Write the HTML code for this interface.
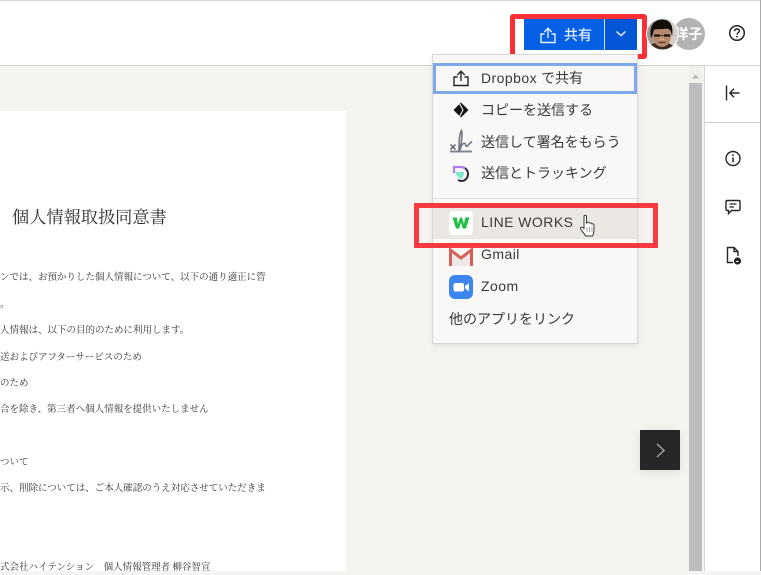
<!DOCTYPE html>
<html lang="ja">
<head>
<meta charset="utf-8">
<title>共有</title>
<style>
html,body{margin:0;padding:0}
body{width:761px;height:571px;position:relative;overflow:hidden;background:#f5f4f0;font-family:"Liberation Sans","Noto Sans CJK JP",sans-serif}
.a{position:absolute}
svg{position:absolute;overflow:visible}
.t{position:absolute;white-space:nowrap;color:#3b3936;font-size:14px;line-height:20px;height:20px}
.l{letter-spacing:.45px}
.d{position:absolute;left:0;white-space:nowrap;color:#333;font-family:"Liberation Serif","Noto Serif CJK SC",serif;font-size:9.5px;line-height:14px;height:14px;filter:blur(.25px)}
</style>
</head>
<body>
<!-- top bar -->
<div class="a" style="left:0;top:0;width:761px;height:65px;background:#fff;border-top:1px solid #d6d6d6;box-sizing:border-box"></div>
<div class="a" style="left:0;top:65px;width:761px;height:1px;background:#d4d2ce"></div>

<!-- document page -->
<div class="a" style="left:0;top:111px;width:346px;height:460px;background:#fff"></div>
<div class="d" style="left:12px;top:208px;font-size:17.2px;line-height:20px;height:20px;color:#2e2e2e;filter:none">個人情報取扱同意書</div>
<div class="d" style="top:271px">ンでは、お預かりした個人情報について、以下の通り適正に管</div>
<div class="d" style="top:298px">。</div>
<div class="d" style="top:324px">人情報は、以下の目的のために利用します。</div>
<div class="d" style="top:351px">送およびアフターサービスのため</div>
<div class="d" style="top:377px">のため</div>
<div class="d" style="top:403px">合を除き、第三者へ個人情報を提供いたしません</div>
<div class="d" style="top:456px">ついて</div>
<div class="d" style="top:482px">示、削除については、ご本人確認のうえ対応させていただきま</div>
<div class="d" style="top:561px">式会社ハイテンション　個人情報管理者 柳谷智宣</div>

<!-- scrollbar -->
<div class="a" style="left:689px;top:66px;width:13px;height:17px;background:#f1f0ed"></div>
<div class="a" style="left:689px;top:83px;width:13px;height:488px;background:#bdbdbd"></div>
<svg style="left:689px;top:66px" width="13" height="17"><path d="M3 12.5L6.5 8.5L10 12.5Z" fill="#b3b3b3"/></svg>

<!-- next button -->
<div class="a" style="left:640px;top:430px;width:40px;height:40px;background:#262626;box-shadow:0 2px 10px rgba(0,0,0,.1)"></div>
<svg style="left:640px;top:430px" width="40" height="40"><path d="M17 14L24 20.5L17 27" fill="none" stroke="#a5a5a5" stroke-width="1.5"/></svg>

<!-- right panel -->
<div class="a" style="left:704px;top:66px;width:57px;height:505px;background:#fff;border-left:1px solid #d8d6d2;box-sizing:border-box"></div>
<div class="a" style="left:704px;top:122px;width:57px;height:1px;background:#cfcdc9"></div>
<div class="a" style="left:760px;top:0;width:1px;height:571px;background:#a9a9a9"></div>
<svg style="left:724px;top:84px" width="18" height="18"><path d="M2.5 1.5V16.5M15.5 9H6M10 4.8L5.8 9L10 13.2" fill="none" stroke="#262626" stroke-width="1.4"/></svg>
<svg style="left:724px;top:149px" width="18" height="18"><circle cx="9" cy="9.5" r="7" fill="none" stroke="#262626" stroke-width="1.4"/><path d="M9 8.5V13.2" stroke="#262626" stroke-width="1.5"/><circle cx="9" cy="6.2" r=".9" fill="#262626"/></svg>
<svg style="left:724px;top:198px" width="18" height="18"><path d="M3.5 2.5H14.5Q16 2.5 16 4V11Q16 12.5 14.5 12.5H7.5L4.5 15.5V12.5H3.5Q2 12.5 2 11V4Q2 2.5 3.5 2.5Z" fill="none" stroke="#262626" stroke-width="1.4"/><path d="M5.5 6H12.5M5.5 9H10" stroke="#262626" stroke-width="1.3"/></svg>
<svg style="left:724px;top:246px" width="18" height="20"><path d="M9 16.5H3.5V1.5H10L14 5.5V10M10 1.5V5.5H14" fill="none" stroke="#262626" stroke-width="1.4"/><circle cx="13.5" cy="15" r="3.6" fill="#262626"/><path d="M12 15.5H14.5" stroke="#fff" stroke-width="1"/></svg>

<!-- share button red annotation -->
<div class="a" style="left:510px;top:14px;width:137px;height:45px;box-sizing:border-box;border:5px solid #fb2f36;border-radius:3px;background:#fff"></div>
<div class="a" style="left:524px;top:19px;width:80px;height:31px;background:#0560e6"></div>
<div class="a" style="left:604px;top:19px;width:1px;height:31px;background:#d7e5fb"></div>
<div class="a" style="left:605px;top:19px;width:32px;height:31px;background:#0456d6"></div>
<svg style="left:539px;top:26px" width="18" height="18"><path d="M9 12V2.5M5.3 6L9 2.3L12.7 6M5.5 8H2V16.5H16V8H12.5" fill="none" stroke="#e6f0ff" stroke-width="1.4"/></svg>
<div class="t" style="left:564px;top:25px;color:#e8f0fd;font-weight:500">共有</div>
<svg style="left:615px;top:29px" width="12" height="10"><path d="M1.5 2.5L6 6.5L10.5 2.5" fill="none" stroke="#e6f0ff" stroke-width="1.5"/></svg>

<!-- avatars -->
<div class="a" style="left:673px;top:18px;width:32px;height:32px;border-radius:50%;background:#b2b2b2;overflow:hidden"><div class="a" style="left:1.5px;top:6px;font-size:14px;line-height:20px;font-weight:700;color:#fff;white-space:nowrap">洋子</div></div>
<svg style="left:646px;top:17px" width="34" height="34">
<defs><clipPath id="av"><circle cx="16.5" cy="17" r="15.5"/></clipPath></defs>
<circle cx="16.5" cy="17" r="16.5" fill="#fff"/>
<g clip-path="url(#av)">
<rect width="34" height="34" fill="#d6cfc9"/>
<rect x="0" y="0" width="8" height="34" fill="#a59a92"/>
<path d="M3 34V28L9 26H22L28 29L30 34Z" fill="#3d2a22"/>
<ellipse cx="16" cy="19" rx="9" ry="11" fill="#b58a6d"/>
<path d="M5 21C2.5 8 9 2.5 16 2.5C24 2.5 28 8 26 20C25 14 24 12 21 11.5C16 12.5 11 11.5 8 13C7 16 6.5 19 5 21Z" fill="#100d0b"/>
<path d="M8 18.5H14M18 18.5H24" stroke="#1a110d" stroke-width="2.2"/>
<path d="M14.5 18.5H17.5" stroke="#33241c" stroke-width="1"/>
<path d="M12.5 25.5H19.5" stroke="#5a3526" stroke-width="1.3"/>
<path d="M14 21.5H18V23H14Z" fill="#d3ac91"/>
</g></svg>

<!-- help -->
<svg style="left:727px;top:23px" width="20" height="20"><circle cx="10" cy="10" r="7.3" fill="none" stroke="#262626" stroke-width="1.5"/><path d="M7.6 8.2C7.6 6.7 8.7 6 10 6C11.4 6 12.4 6.8 12.4 8C12.4 9.6 10 9.6 10 11.6" fill="none" stroke="#262626" stroke-width="1.4"/><circle cx="10" cy="13.6" r=".9" fill="#262626"/></svg>

<!-- menu -->
<div class="a" style="left:432px;top:54px;width:206px;height:290px;box-sizing:border-box;background:#faf8f6;border:1px solid #d9d7d3;box-shadow:0 2px 6px rgba(0,0,0,.08)"></div>
<div class="a" style="left:433px;top:63px;width:204px;height:31px;box-sizing:border-box;border:3px solid #7ea8ec;background:#faf8f6"></div>
<svg style="left:452px;top:69px" width="18" height="18"><path d="M9 12V2.5M5.3 6L9 2.3L12.7 6M5.5 8H2V16.5H16V8H12.5" fill="none" stroke="#262626" stroke-width="1.4"/></svg>
<div class="t" style="left:481px;top:68px"><span class="l">Dropbox</span> で共有</div>

<svg style="left:453px;top:102px" width="16" height="16"><path d="M8 .5L15.5 8L8 15.5L.5 8Z" fill="#141414"/><path d="M6.5 1.5L10 8L6.5 14.5" fill="none" stroke="#faf8f6" stroke-width="1.1"/></svg>
<div class="t" style="left:481px;top:100px">コピーを送信する</div>

<svg style="left:449px;top:129px" width="24" height="25"><path d="M1 22.5H23" stroke="#7f8794" stroke-width="1.9"/><path d="M1.5 15.5L6.5 20.5M6.5 15.5L1.5 20.5" stroke="#59606d" stroke-width="1.5"/><path d="M10 23C10 14 10 6 12.5 1.5C14.5 6 11 18 11.5 19.5C13 14 16 13 16.5 15.5C17 18 18 18 20 15L23 12.5" fill="none" stroke="#6d7583" stroke-width="1.6"/></svg>
<div class="t" style="left:481px;top:132px">送信して署名をもらう</div>

<svg style="left:451px;top:164px" width="20" height="20"><path d="M3 9V3H10C14 3 17 6 17 10C17 14 14 17 10.5 17C9 17 8 16.5 7 16" fill="none" stroke="#2f2a44" stroke-width="2"/><path d="M3 9V3H10C12 3 13 3.5 14 4.5" fill="none" stroke="#b47cf4" stroke-width="2.2"/><path d="M4 8H13C13 11 12 14 10 15C7.5 14 5 11 4 8Z" fill="#7de8cf"/></svg>
<div class="t" style="left:481px;top:163px">送信とトラッキング</div>

<div class="a" style="left:433px;top:198px;width:204px;height:1px;background:#e2e0dc"></div>

<!-- hover row -->
<div class="a" style="left:433px;top:207px;width:204px;height:32px;background:#ebe8e3"></div>
<div class="a" style="left:449px;top:211px;width:24px;height:24px;background:#fff;border-radius:4px"></div>
<svg style="left:449px;top:211px" width="24" height="24"><path d="M3.5 6.5H7.8L9 13L11 6.5H13L15 13L16.2 6.5H20.5L17 17.5H13.8L12 11.5L10.2 17.5H7Z" fill="#22bf47"/></svg>
<div class="t l" style="left:481px;top:212px">LINE WORKS</div>

<!-- red annotation 2 -->
<div class="a" style="left:414px;top:203px;width:244px;height:45px;box-sizing:border-box;border:5px solid #fb3a3f"></div>

<!-- cursor -->
<svg style="left:579px;top:214px" width="18" height="24"><path d="M5 2.5C5 1 7.5 1 7.5 2.5V9.5L8 8.5C9 8 10 8 10.3 9C11.2 8.5 12.3 8.8 12.5 9.8C13.5 9.4 15 10 15 11.5V17C15 19.5 14 20.5 13.5 22H6.5C6 20 2 16.5 1.5 14.5C1.2 13 3 12.5 5 14.5Z" fill="#fff" stroke="#3a3a3a" stroke-width="1"/><path d="M8 13V18M10.5 13V18M13 13V18" stroke="#777" stroke-width=".7"/></svg>

<!-- gmail -->
<svg style="left:449px;top:248px" width="24" height="18"><path d="M0 0V18H24V0L12 9Z" fill="#eee9e7"/><path d="M1.5 18V2L12 10L22.5 2V18" fill="none" stroke="#d4605a" stroke-width="3"/></svg>
<div class="t l" style="left:481px;top:244px">Gmail</div>

<!-- zoom -->
<div class="a" style="left:449px;top:275px;width:24px;height:24px;background:#3d85ee;border-radius:6px"></div>
<svg style="left:449px;top:275px" width="24" height="24"><rect x="4.5" y="8" width="10.5" height="8.5" rx="2" fill="#fff"/><path d="M16 11L20 8.2V16.3L16 13.5Z" fill="#fff"/></svg>
<div class="t l" style="left:481px;top:276px">Zoom</div>

<div class="t" style="left:449px;top:309px">他のアプリをリンク</div>
</body>
</html>
